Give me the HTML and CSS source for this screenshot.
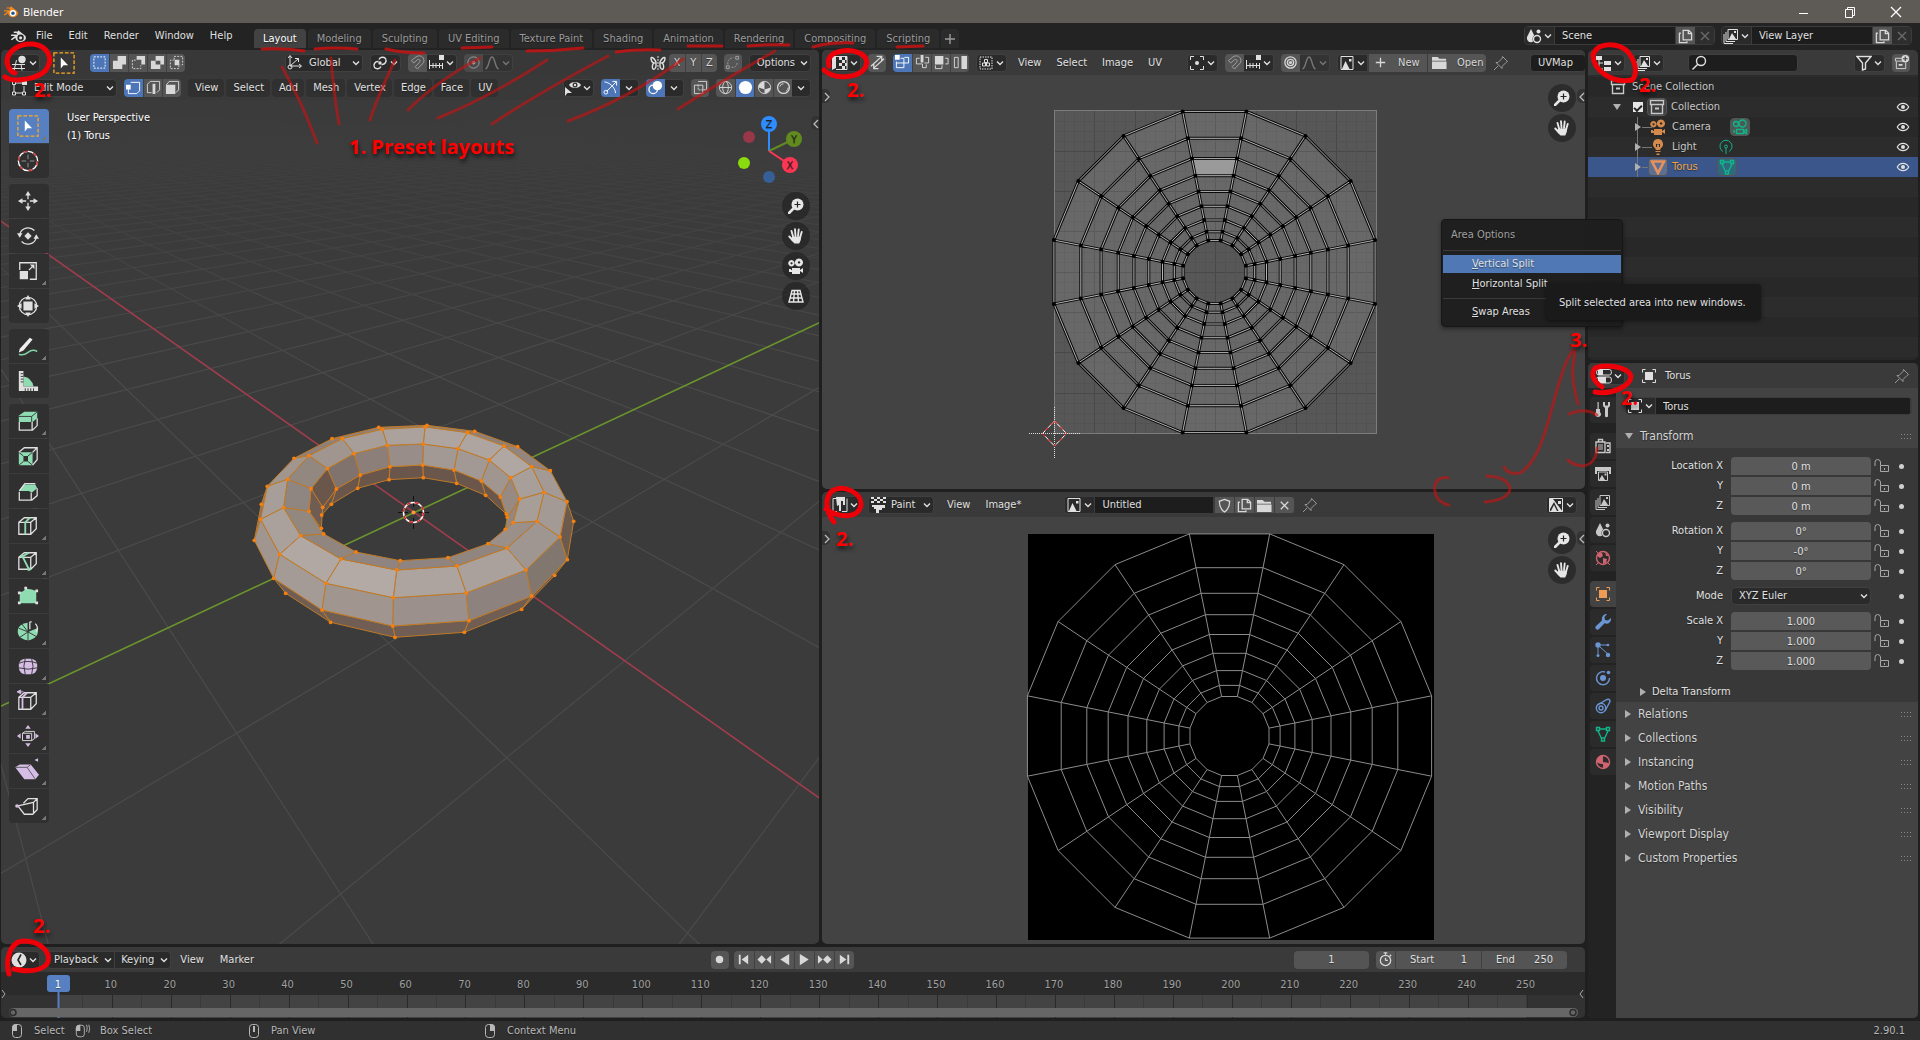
FILE: index.html
```html
<!DOCTYPE html>
<html lang="en">
<head>
<meta charset="utf-8">
<title>Blender</title>
<link rel="stylesheet" href="styles.css">
</head>
<body>
<svg class="defs" aria-hidden="true">
<defs>
<symbol id="chev" viewBox="0 0 10 16"><path class="s2" d="M2 6.500l3 3 3-3"/></symbol>
<symbol id="blender" viewBox="0 0 16 16"><path class="f" d="M8.200 2.200L15 7.600c1.300 1.200 1.200 3.600-.4 5-2 1.800-5.600 1.900-7.700.1-1-.9-1.500-2-1.500-3L2.300 12c-.8.5-1.700-.4-1-1.100L5 8H1.600c-.9 0-1-1.300-.1-1.400h6.200L6.400 4.900H4.200c-.8-.1-.8-1.300 0-1.300h3.700z"/><circle cx="10.600" cy="9.800" r="3.200" fill="#232323"/><circle class="f" cx="10.600" cy="9.800" r="1.600"/></symbol>
<symbol id="blendercol" viewBox="0 0 16 16"><path fill="#f08a1d" d="M8.200 2.200L15 7.600c1.300 1.200 1.200 3.600-.4 5-2 1.800-5.600 1.900-7.700.1-1-.9-1.500-2-1.500-3L2.300 12c-.8.5-1.700-.4-1-1.100L5 8H1.600c-.9 0-1-1.300-.1-1.400h6.200L6.400 4.900H4.200c-.8-.1-.8-1.300 0-1.300h3.700z"/><circle cx="10.600" cy="9.800" r="3.300" fill="#fff"/><circle fill="#265a8f" cx="10.600" cy="9.800" r="1.900"/></symbol>
<symbol id="view3d" viewBox="0 0 16 16"><path class="s" d="M1 9.500h13M0 13.500h14M5.500 5L3 15.500M10 9l1 6.500"/><circle class="f" cx="11" cy="4.500" r="3.700"/></symbol>
<symbol id="selbox" viewBox="0 0 24 24"><rect x="1" y="1" width="22" height="22" fill="none" stroke="#ffa81f" stroke-width="1.400" stroke-dasharray="4 2"/><path d="M8.500 6v12l3-3.500h5z" fill="#fff"/></symbol>
<symbol id="m1" viewBox="0 0 16 16"><rect class="s" x="2" y="2" width="12" height="12" stroke-dasharray="2 1.400"/></symbol>
<symbol id="m2" viewBox="0 0 16 16"><path class="f" d="M6 1h9v9h-4v5H1V6h5z"/></symbol>
<symbol id="m3" viewBox="0 0 16 16"><path class="f" d="M6 1h9v9h-4V5H6z"/><path class="s" d="M5 5.500H1.500v9h9V11" stroke-dasharray="2 1.400"/></symbol>
<symbol id="m4" viewBox="0 0 16 16"><path class="f" fill-rule="evenodd" d="M6 1h9v9h-4v5H1V6h5zM6 6v4h5V6z"/></symbol>
<symbol id="m5" viewBox="0 0 16 16"><path class="f" d="M6 5h5v6H6z"/><path class="s" d="M5.500 5V1.500h9v9H12M10.500 11v3.500h-9v-9H5" stroke-dasharray="2 1.400"/></symbol>
<symbol id="axes" viewBox="0 0 16 16"><path class="s" d="M3 1v10h11M3 11L11 4M1 3l2-2.500L5 3M12 9l2.500 2-2.500 2M8 3.500h3.500V7"/><circle class="s" cx="3" cy="12" r="2"/></symbol>
<symbol id="pivot" viewBox="0 0 16 16"><path class="s2" d="M6.500 6.500a4 4 0 0 0-4 6 4 4 0 0 0 6.500-1M7 4.500a4 4 0 0 1 6.500-1 4 4 0 0 1-4 6"/><circle class="f" cx="8" cy="8" r="1.700"/></symbol>
<symbol id="magnet" viewBox="0 0 16 16"><path class="s" d="M1.500 6l5-4c3-2 7-1 8 2s0 5-2 6l-4.500 5-2.500-2.500 4.500-4.500c2-2 0-4-2-3L4 8.500z"/></symbol>
<symbol id="snapinc" viewBox="0 0 16 16"><path class="s" d="M1.500 5v9M14.500 8v6M1.500 10.500h13M5 8v5M8 8v5M11.500 8v5"/><path class="f" d="M11 0h5v5h-5z"/></symbol>
<symbol id="prop" viewBox="0 0 16 16"><circle class="s2" cx="8" cy="8" r="6"/><circle class="s2" cx="8" cy="8" r="3.300"/><circle class="f" cx="8" cy="8" r="1.700"/></symbol>
<symbol id="prop1" viewBox="0 0 16 16"><circle class="s" cx="8" cy="8" r="6"/><circle class="f" cx="8" cy="8" r="2"/></symbol>
<symbol id="curve" viewBox="0 0 16 16"><path class="s2" d="M1.500 14C5 13 5 2 8 2s3 11 6.500 12"/></symbol>
<symbol id="bfly" viewBox="0 0 16 16"><path class="s2" d="M6 7C4 2 1 2 1 3s0 4 3 5c-2 1-2 5-1 6s3-1 3-3zM10 7c2-5 5-5 5-4s0 4-3 5c2 1 2 5 1 6s-3-1-3-3z"/><path class="s" d="M8 1v14" stroke-dasharray="2 1"/></symbol>
<symbol id="automerge" viewBox="0 0 16 16"><path class="s" d="M3 10L3 7Q5 3 9 3M7 13h3q3-1 3-6" stroke-dasharray="2 1.400"/><path class="s" d="M1.500 11.500h3v3h-3zM11.500 1.500h3v3h-3z"/></symbol>
<symbol id="editm" viewBox="0 0 16 16"><path class="s" d="M4 3h7M3 4v8M13 6v6M4 13h8M1.500 1.500h3v3h-3zM1.500 12h3v3h-3zM11.500 12h3v3h-3z"/><path class="f" d="M11 0h5v5h-5z"/></symbol>
<symbol id="vsel" viewBox="0 0 16 16"><path class="s" d="M5 2.500h9.500v9l-3 3H2.500V8"/><path class="f" d="M0 5h5v5H0z"/></symbol>
<symbol id="esel" viewBox="0 0 16 16"><path class="s" d="M6 13.500H1.500v-9l3-3h10v9l-3 3"/><path class="f" d="M7 4h3v11H7z"/></symbol>
<symbol id="fsel" viewBox="0 0 16 16"><path class="s" d="M1.500 5l3-3.500h10v9l-3 3"/><path class="f" d="M1 5h10v10H1z"/></symbol>
<symbol id="vis" viewBox="0 0 16 16"><path class="f" fill-rule="evenodd" d="M4 5C6 1 14 1 16 5c-2 4-10 4-12 0zM10 2.500a2.500 2.500 0 1 0 .1 0zM0 7v9l2.500-3H7z"/><circle class="f" cx="10" cy="5" r="1.200"/></symbol>
<symbol id="giz" viewBox="0 0 16 16"><path class="s" d="M4 12L14 2M10 1.500h4.500V6M1.500 2c5 .5 11 5 12 12"/><circle class="s" cx="3" cy="13" r="2"/></symbol>
<symbol id="over" viewBox="0 0 16 16"><circle class="f" cx="10" cy="6" r="5"/><circle class="s2" cx="5.500" cy="10" r="4.500"/></symbol>
<symbol id="xray" viewBox="0 0 16 16"><path class="s" d="M5.500 1.500h9v9h-3M1.500 5.500h9v9h-9z"/><path class="s" d="M5.500 5v5.500H11" stroke-dasharray="2 1"/></symbol>
<symbol id="wire" viewBox="0 0 16 16"><circle class="s" cx="8" cy="8" r="6.500"/><ellipse class="s" cx="8" cy="8" rx="3" ry="6.500"/><path class="s" d="M1.500 8h13"/></symbol>
<symbol id="solid" viewBox="0 0 16 16"><circle class="f" cx="8" cy="8" r="7"/></symbol>
<symbol id="matp" viewBox="0 0 16 16"><circle class="s" cx="8" cy="8" r="6.500"/><path class="f" d="M8 1.500A6.500 6.500 0 0 0 1.500 8L8 10zM8 10l6.500-2A6.500 6.500 0 0 1 8 14.500z"/></symbol>
<symbol id="rend" viewBox="0 0 16 16"><circle class="s2" cx="8" cy="8" r="6.300"/><path class="s" d="M4 7q1-3 4-3M11 12q2-2 2-4" /></symbol>
<symbol id="uvicon" viewBox="0 0 16 16"><path class="f" d="M0 1h4v12l-4 2z"/><path class="s" d="M4 1.500h11v13H4"/><path class="f" d="M7 2h3v3H7zM10 5h3v3h-3zM7 8h3v3H7zM10 11h3v3h-3zM13 2h2v3h-2zM13 8h2v3h-2z"/></symbol>
<symbol id="sync" viewBox="0 0 16 16"><path class="s2" d="M1 12L12 2M7 1.500h5.500V6M15 4L4 14M4 9.500V14.500h5"/></symbol>
<symbol id="uv1" viewBox="0 0 16 16"><path class="s" d="M6 3.500h3.500v10h-8V7M6 8.500h8.500v-6H10M1.500 8.500H6"/><path class="f" d="M0 0h5v5H0z"/></symbol>
<symbol id="uv2" viewBox="0 0 16 16"><path class="s" d="M5 3.500H1.500v6H8v4h4V10M11 2.500h3.500v6H10"/><path class="f" d="M6 0h3v8H6z"/></symbol>
<symbol id="uv3" viewBox="0 0 16 16"><path class="s" d="M12 3.500h3v6h-3M1.500 11v3.500h7V11"/><path class="f" d="M1 1h9v9H1z"/></symbol>
<symbol id="uv4" viewBox="0 0 16 16"><path class="s" d="M1.500 2.500h4v11h-4z"/><path class="f" d="M9 1h6v14H9z"/></symbol>
<symbol id="sticky" viewBox="0 0 16 16"><path class="s" d="M2 2h12v12H2z" stroke-dasharray="1.500 1"/><path class="s" d="M6.500 4.500h3v3h-3zM4.500 8h3v3h-3zM8.500 8h3v3h-3z"/></symbol>
<symbol id="bound" viewBox="0 0 16 16"><path class="s" d="M1.500 5V1.500H5M11 1.500h3.500V5M14.500 11v3.500H11M5 14.500H1.500V11"/><circle class="f" cx="8" cy="8" r="2"/></symbol>
<symbol id="image" viewBox="0 0 16 16"><path class="s" d="M2 1.500h12v13H2z"/><path class="f" d="M3 14l3.500-8 4 8zM10 4h2.500v2.500H10z"/></symbol>
<symbol id="imagea" viewBox="0 0 16 16"><path class="s" d="M1.500 1.500h13v13h-13z"/><path class="f" d="M2 2h3l10 13H11L6 5 2 12zM3 14l3-6 3 6zM10 4h3v3h-3z"/></symbol>
<symbol id="plus" viewBox="0 0 16 16"><path class="s2" d="M8 3v10M3 8h10"/></symbol>
<symbol id="folder" viewBox="0 0 16 16"><path class="f" d="M0 2h6l2 2h7v2H0zM0 7h15.500v8H0z"/></symbol>
<symbol id="pin" viewBox="0 0 16 16"><path class="s" d="M9.500 1.500l5 5-1.500 1-4 4 0 2-6-6 2 0 4-4zM5 11l-4 4"/></symbol>
<symbol id="scene" viewBox="0 0 16 16"><path class="f" d="M5 1l4 8a4 4 0 0 1-3 5 4 4 0 0 1-5-5z"/><circle cx="11" cy="11" r="4.500" fill="#2a2a2a"/><circle class="s2" cx="11" cy="11" r="3.500"/><circle class="f" cx="12.500" cy="3.500" r="2"/></symbol>
<symbol id="vlayer" viewBox="0 0 16 16"><path class="s" d="M5 1.500h9.500v10H5zM3 4v9.500h9M1 6v9.500h9"/><path class="f" d="M6 11l3-6 4 6zM11 3h2v2h-2z"/></symbol>
<symbol id="copy" viewBox="0 0 16 16"><path class="s2" d="M5.500 1.500h6l3 3v7h-9zM11 2v3h3M3 4.500H1.500v10h8V13"/></symbol>
<symbol id="x" viewBox="0 0 16 16"><path class="s2" d="M4 4l8 8M12 4l-8 8"/></symbol>
<symbol id="tree" viewBox="0 0 16 16"><path class="f" d="M0 1h6v4H0zM8 6h7v4H8zM8 12h7v4H8z"/><path class="s" d="M3 5v9h4M3 8h4"/></symbol>
<symbol id="search" viewBox="0 0 16 16"><circle class="s2" cx="10" cy="6" r="4.500"/><path class="s2" d="M7 9l-5.500 5.500"/></symbol>
<symbol id="filter" viewBox="0 0 16 16"><path class="s2" d="M1 1.500h14L9.500 8v6l-3 1V8z"/></symbol>
<symbol id="box" viewBox="0 0 16 16"><path class="s2" d="M1.500 1.500h13v4h-13zM2.500 6v8.500h11V6"/><path class="f" d="M6 8.500h4v2H6z"/></symbol>
<symbol id="newcol" viewBox="0 0 16 16"><path class="s" d="M9 3.500H1.500v3h12M2.500 7v7.500h10V8"/><path class="f" d="M5 9.500h4v2H5z"/><circle class="f" cx="12" cy="4" r="4"/><path d="M12 1.500v5M9.500 4h5" stroke="#444" stroke-width="1.300"/></symbol>
<symbol id="cam" viewBox="0 0 16 16"><path class="f" fill-rule="evenodd" d="M3.500 2a3.200 3.200 0 1 1-.1 0zM3.500 4.200a1 1 0 1 0 .1 0zM11 .5a4 4 0 1 1-.1 0zM11 3.200a1.200 1.200 0 1 0 .1 0zM1 11h2v1h1v-2h8v2l3-2v5l-3-2v3H4v-2H1z"/></symbol>
<symbol id="camo" viewBox="0 0 16 16"><circle class="s2" cx="4" cy="5" r="2.500"/><circle class="s2" cx="10.500" cy="4.500" r="3.500"/><path class="s2" d="M4.500 10.500h7v4h-7zM12 12l2.500-1.500v4L12 13zM2 11v3"/></symbol>
<symbol id="bulb" viewBox="0 0 16 16"><path class="f" fill-rule="evenodd" d="M8 0a5 5 0 0 1 3 9l-1 2H6L5 9a5 5 0 0 1 3-9zM6 5v3h1V6h2v2h1V5H9L8 6 7 5zM5.500 12h5v1h-5zM6.500 14.500h3v1.500h-3z"/></symbol>
<symbol id="lightd" viewBox="0 0 16 16"><path class="s" d="M5 12.500A6 6 0 1 1 11 12.500M8 9v6"/><circle class="s" cx="8" cy="7.500" r="1.500"/></symbol>
<symbol id="mesh" viewBox="0 0 16 16"><path d="M2 2.500h12L8 14z" fill="none" stroke="currentColor" stroke-width="2.600"/></symbol>
<symbol id="meshd" viewBox="0 0 16 16"><path class="s2" d="M5 3h6M3 5l3.500 7.500M13 5l-3.500 7.500M1.500 1.500h3v3h-3zM11.500 1.500h3v3h-3zM6.500 12h3v3h-3z"/></symbol>
<symbol id="eye" viewBox="0 0 16 16"><path class="s2" d="M1.500 8C4.500 2.500 11.500 2.500 14.500 8 11.500 13.500 4.500 13.500 1.500 8z"/><circle class="f" cx="8" cy="8" r="2.300"/></symbol>
<symbol id="props" viewBox="0 0 16 16"><rect class="s" x=".7" y="1.500" width="14.600" height="5.500" rx="2"/><rect class="s" x=".7" y="9" width="14.600" height="6" rx="2"/><path class="f" d="M2 2h5v5H2zM2 9h8v6H2z"/></symbol>
<symbol id="object" viewBox="0 0 16 16"><path class="s" d="M1.500 4.500v-3h3M11.500 1.500h3v3M14.500 11.500v3h-3M4.500 14.500h-3v-3"/><path class="f" d="M4 4h8v8H4z"/></symbol>
<symbol id="tool" viewBox="0 0 16 16"><path class="f" d="M2.500 0h1.200v7H5v3c2 2 1 5-2 5s-4-3-2-5V7h1.500zM8 0v4l2 2v8.500q1.500 1.500 3 0V6l2-2V0l-2 0v3.500h-3V0z"/></symbol>
<symbol id="render" viewBox="0 0 16 16"><path class="s2" d="M1 4h9v10.500H1zM3.500 4V1.500h4V4M11 5h4v9.500h-4"/><path class="s" d="M3 7h5M3 9h5M3 11h5"/><path class="f" d="M12 7h2v2h-2zM12 11h2v2h-2z"/></symbol>
<symbol id="output" viewBox="0 0 16 16"><path class="f" d="M0 1h16v7h-2V5H2v3H0z"/><path class="s" d="M3.500 6h9v8.500h-9z"/><path class="f" d="M4 14l3-5 3 5zM9.500 7.500h2v2h-2z"/></symbol>
<symbol id="world" viewBox="0 0 16 16"><circle class="s2" cx="8" cy="8" r="6.500"/><path class="f" d="M3 3l4 0 1 3-3 2-3-2zM8 8l4 1-1 4-3 1zM10 2l4 4-3 0z"/><path class="s" d="M1 1l3 3M15 15l-2-2M1 15l2-2"/></symbol>
<symbol id="wrench" viewBox="0 0 16 16"><path class="f" d="M12 0L9.500 3 10 6l3 .6L15.800 4C17 8 13 11 9.600 9.300L4 15c-2 2-5-1-3-3l6-5.400C6 3 9-.5 12 0z"/></symbol>
<symbol id="part" viewBox="0 0 16 16"><path class="s" d="M5 3h7M3 5v7M5 5l8 7"/><circle class="f" cx="3" cy="3" r="2.700"/><circle class="f" cx="13" cy="3" r="1.300"/><circle class="f" cx="3" cy="13.500" r="1.500"/><circle class="f" cx="13" cy="13" r="2.200"/></symbol>
<symbol id="phys" viewBox="0 0 16 16"><path class="s2" d="M10 2a6.500 6.500 0 1 0 4.500 6"/><circle class="f" cx="8" cy="8" r="3"/><circle class="f" cx="13.500" cy="2.500" r="1.800"/></symbol>
<symbol id="constr" viewBox="0 0 16 16"><circle class="s2" cx="6" cy="10" r="4.700"/><circle class="s2" cx="6" cy="10" r="2"/><path class="s2" d="M2.500 7L12 1.500c3-1 3.500 1.500 2.500 3L10 13"/></symbol>
<symbol id="mat" viewBox="0 0 16 16"><circle class="s2" cx="8" cy="8" r="6.500"/><path class="f" d="M8 1.500A6.500 6.500 0 0 0 1.500 8q3 2.500 6.500 2zM8 8q4 0 6.500 1.500A6.500 6.500 0 0 1 8 14.500z"/></symbol>
<symbol id="lock" viewBox="0 0 16 16"><path class="s" d="M1 8V4.500q0-3 2.500-3T6.500 4v3M6.500 7.500h8v6h-8z"/><path class="f" d="M10 10h1v2h-1z"/></symbol>
<symbol id="paint" viewBox="0 0 16 16"><path class="s" d="M5 1.500H1v13h4M10 14.500h5v-13"/><path class="f" d="M4 0h9v8H11V4H9v10H7V8L5 9z"/></symbol>
<symbol id="brush" viewBox="0 0 16 16"><path class="f" d="M1 0h3v2H1zM7 0h3v2H7zM13 0h3v2h-3zM4 2h3v2H4zM10 2h3v2h-3zM1 4h3v2H1zM7 4h3v2H7zM13 4h3v2h-3zM2 8h13v3h-3v2H9v3H6v-4H4v-2H2z"/></symbol>
<symbol id="shield" viewBox="0 0 16 16"><path class="s2" d="M8 1.500l5.500 2c0 6-2 9-5.500 11.500C4.500 12.500 2.500 9.500 2.500 3.500z"/></symbol>
<symbol id="clock" viewBox="0 0 16 16"><circle class="f" cx="8" cy="8" r="7.500"/><path d="M10 2.500L7 8l3 5" fill="none" stroke="#222" stroke-width="1.600"/></symbol>
<symbol id="stopw" viewBox="0 0 16 16"><circle class="s2" cx="8" cy="9" r="5.500"/><path class="s2" d="M6 1h4M8 1v2M8 9V6M8 9h2.500M12.500 3l1.500 1.500"/></symbol>
<symbol id="dot" viewBox="0 0 16 16"><circle class="f" cx="8" cy="8" r="4"/></symbol>
<symbol id="first" viewBox="0 0 16 16"><path class="f" d="M3 3h2v10H3zM13 3v10L6 8z"/></symbol>
<symbol id="prevk" viewBox="0 0 16 16"><path class="f" d="M5 3.500L9.500 8 5 12.500.5 8zM15 3.500v9L10 8z"/></symbol>
<symbol id="playb" viewBox="0 0 16 16"><path class="f" d="M13 2v12L3.500 8z"/></symbol>
<symbol id="play" viewBox="0 0 16 16"><path class="f" d="M3 2v12l9.500-6z"/></symbol>
<symbol id="nextk" viewBox="0 0 16 16"><path class="f" d="M11 3.500L15.500 8 11 12.500 6.500 8zM1 3.500v9L6 8z"/></symbol>
<symbol id="last" viewBox="0 0 16 16"><path class="f" d="M11 3h2v10h-2zM3 3v10l7-5z"/></symbol>
<symbol id="ml" viewBox="0 0 16 16"><rect class="s" x="3.500" y="1.500" width="9" height="13" rx="3"/><path class="f" d="M3 8V5q0-4 5-4v7z"/></symbol>
<symbol id="mld" viewBox="0 0 18 16"><rect class="s" x="1.500" y="1.500" width="9" height="13" rx="3"/><path class="f" d="M1 8V5q0-4 5-4v7z"/><path class="s" d="M13 1q1.500 3 0 8M15.500 1q2 4 0 9"/></symbol>
<symbol id="mm" viewBox="0 0 16 16"><rect class="s" x="3.500" y="1.500" width="9" height="13" rx="3"/><path class="f" d="M7 3h2v6H7z"/></symbol>
<symbol id="mr" viewBox="0 0 16 16"><rect class="s" x="3.500" y="1.500" width="9" height="13" rx="3"/><path class="f" d="M13 8V5q0-4-5-4v7z"/></symbol>
<symbol id="zoomi" viewBox="0 0 16 16"><circle class="f" cx="9.500" cy="6.500" r="6"/><path d="M1 15l4.500-4.500" stroke="currentColor" stroke-width="2.600" stroke-linecap="round"/><path d="M9.500 3.500v6M6.500 6.500h6" stroke="#222" stroke-width="1.200"/></symbol>
<symbol id="hand" viewBox="0 0 16 16"><path d="M5.200 9L3.500 3M7.500 8L7 1.200M10 8l.7-6.500M12.200 9l1.500-5M4.500 12L1.300 8.500" stroke="currentColor" stroke-width="1.900" stroke-linecap="round"/><path class="f" d="M4.200 8.500h9q0 4-2 7H6.500q-3-2-3.500-4.500z"/></symbol>
<symbol id="persp" viewBox="0 0 16 16"><path class="s2" d="M4 2.500h8l3 11.500H1zM3 6h10M2 10h12M6.500 2.500L5.500 14M9.500 2.500l1 11.500"/></symbol>
<symbol id="cube" viewBox="0 0 24 24"><path class="s2" d="M2 8h13v13H2zM2 8l6-5h13v12l-6 6M15 8l6-5"/></symbol>
</defs>
</svg>

<header class="titlebar">
  <svg class="ic logo"><use href="#blendercol"/></svg><span>Blender</span>
  <div class="winctl">
    <button aria-label="Minimise"><svg class="ic"><path d="M3 9.500h9" stroke="#fff"/></svg></button>
    <button aria-label="Restore"><svg class="ic"><path d="M3.500 5.500h7v8h-7zM5.500 5V3.500h7v8H11" fill="none" stroke="#fff"/></svg></button>
    <button aria-label="Close"><svg class="ic"><path d="M3 3l10 10M13 3L3 13" stroke="#fff" stroke-width="1.300"/></svg></button>
  </div>
</header>

<nav class="topbar">
  <div class="appmenu">
    <button aria-label="Blender"><svg class="ic"><use href="#blender"/></svg></button>
    <button>File</button><button>Edit</button><button>Render</button><button>Window</button><button>Help</button>
  </div>
  <div class="tabs">
    <button class="on">Layout</button><button>Modeling</button><button>Sculpting</button><button>UV Editing</button><button>Texture Paint</button><button>Shading</button><button>Animation</button><button>Rendering</button><button>Compositing</button><button>Scripting</button><button class="add" aria-label="Add workspace"><svg class="ic"><use href="#plus"/></svg></button>
  </div>
  <div class="idrow">
    <div class="idb"><button class="dd" aria-label="Browse scene"><svg class="ic"><use href="#scene"/></svg><svg class="cv"><use href="#chev"/></svg></button><input aria-label="Scene" value="Scene"><button class="tg" aria-label="New scene"><svg class="ic"><use href="#copy"/></svg></button><button class="off" aria-label="Remove scene"><svg class="ic"><use href="#x"/></svg></button></div>
    <div class="idb"><button class="dd" aria-label="Browse view layer"><svg class="ic"><use href="#vlayer"/></svg><svg class="cv"><use href="#chev"/></svg></button><input aria-label="View layer" value="View Layer"><button class="tg" aria-label="New view layer"><svg class="ic"><use href="#copy"/></svg></button><button class="off" aria-label="Remove view layer"><svg class="ic"><use href="#x"/></svg></button></div>
  </div>
</nav>

<main class="screen">
  <div class="work">
    <div class="editors">
      <section class="area view3d">
        <svg id="scene3d" class="under" viewBox="1 50 818 894" preserveAspectRatio="xMidYMid slice"></svg>
        <div class="hd">
          <button class="dd" aria-label="Editor type"><svg class="ic"><use href="#view3d"/></svg><svg class="cv"><use href="#chev"/></svg></button>
          <button class="acttool" aria-label="Select Box"><svg><use href="#selbox"/></svg></button>
          <div class="grp modes"><button class="tg on" aria-label="Set"><svg class="ic"><use href="#m1"/></svg></button><button class="tg" aria-label="Extend"><svg class="ic"><use href="#m2"/></svg></button><button class="tg" aria-label="Subtract"><svg class="ic"><use href="#m3"/></svg></button><button class="tg" aria-label="Difference"><svg class="ic"><use href="#m4"/></svg></button><button class="tg" aria-label="Intersect"><svg class="ic"><use href="#m5"/></svg></button></div>
          <label class="dd orient"><svg class="ic"><use href="#axes"/></svg><select aria-label="Orientation"><option>Global</option></select><svg class="cv"><use href="#chev"/></svg></label>
          <button class="dd" aria-label="Pivot"><svg class="ic"><use href="#pivot"/></svg><svg class="cv"><use href="#chev"/></svg></button>
          <div class="grp"><button class="tg dim" aria-label="Snap"><svg class="ic"><use href="#magnet"/></svg></button><button class="dd" aria-label="Snap to"><svg class="ic"><use href="#snapinc"/></svg><svg class="cv"><use href="#chev"/></svg></button></div>
          <div class="grp faint"><button class="tg dim" aria-label="Proportional"><svg class="ic"><use href="#prop1"/></svg></button><button class="dd" aria-label="Falloff"><svg class="ic"><use href="#curve"/></svg><svg class="cv"><use href="#chev"/></svg></button></div>
          <div class="end mirror">
            <svg class="ic"><use href="#bfly"/></svg>
            <div class="grp letters"><button class="tg">X</button><button class="tg">Y</button><button class="tg">Z</button></div>
            <button class="tg solo dim" aria-label="Auto merge"><svg class="ic"><use href="#automerge"/></svg></button>
            <button class="dd txt">Options<svg class="cv"><use href="#chev"/></svg></button>
          </div>
        </div>
        <div class="hd clear">
          <label class="dd mode"><svg class="ic"><use href="#editm"/></svg><select aria-label="Mode"><option>Edit Mode</option></select><svg class="cv"><use href="#chev"/></svg></label>
          <div class="grp"><button class="tg on" aria-label="Vertex"><svg class="ic"><use href="#vsel"/></svg></button><button class="tg" aria-label="Edge"><svg class="ic"><use href="#esel"/></svg></button><button class="tg" aria-label="Face"><svg class="ic"><use href="#fsel"/></svg></button></div>
          <div class="menus boxed"><button>View</button><button>Select</button><button>Add</button><button>Mesh</button><button>Vertex</button><button>Edge</button><button>Face</button><button>UV</button></div>
          <div class="end">
            <button class="dd" aria-label="Visibility"><svg class="ic"><use href="#vis"/></svg><svg class="cv"><use href="#chev"/></svg></button>
            <div class="grp"><button class="tg on" aria-label="Gizmos"><svg class="ic"><use href="#giz"/></svg></button><button class="dd" aria-label="Gizmo options"><svg class="cv"><use href="#chev"/></svg></button></div>
            <div class="grp"><button class="tg on" aria-label="Overlays"><svg class="ic"><use href="#over"/></svg></button><button class="dd" aria-label="Overlay options"><svg class="cv"><use href="#chev"/></svg></button></div>
            <button class="tg solo" aria-label="X-ray"><svg class="ic"><use href="#xray"/></svg></button>
            <div class="grp"><button class="tg" aria-label="Wireframe"><svg class="ic"><use href="#wire"/></svg></button><button class="tg on" aria-label="Solid"><svg class="ic"><use href="#solid"/></svg></button><button class="tg" aria-label="Material"><svg class="ic"><use href="#matp"/></svg></button><button class="tg" aria-label="Rendered"><svg class="ic"><use href="#rend"/></svg></button><button class="dd" aria-label="Shading options"><svg class="cv"><use href="#chev"/></svg></button></div>
          </div>
        </div>
        <div class="vbody">
          <div class="toolbar">
            <div><button class="on more" aria-label="Select Box"><svg><use href="#selbox"/></svg></button><button aria-label="Cursor"><svg viewBox="0 0 24 24"><circle cx="12" cy="12" r="10.500" fill="none" stroke="#fff" stroke-width="1.500"/><circle cx="12" cy="12" r="10.500" fill="none" stroke="#c33" stroke-width="1.500" stroke-dasharray="5 6"/><path d="M12 5v5M12 14v5M5 12h5M14 12h5" stroke="#999"/></svg></button></div>
            <div>
              <button aria-label="Move"><svg viewBox="0 0 24 24"><path class="f" d="M12 1l3 5H9zM12 23l3-5H9zM1 12l5-3v6zM23 12l-5-3v6z"/><path class="s2" d="M12 5v5M12 14v5M5 12h5M14 12h5"/></svg></button>
              <button aria-label="Rotate"><svg viewBox="0 0 24 24"><path class="s2" d="M3 10a9.500 9.500 0 0 1 16-4M21 14a9.500 9.500 0 0 1-16 4"/><path class="f" d="M0 9h6l-3 5zM24 15h-6l3-5zM12 8l4 4-4 4-4-4z"/></svg></button>
              <button class="more" aria-label="Scale"><svg viewBox="0 0 24 24"><path class="s2" d="M3 11V3h18v18h-7"/><path class="f" d="M3 12h9v9H3zM19 5v5l-5-5z"/><path class="s2" d="M13 11l5-5"/></svg></button>
              <button aria-label="Transform"><svg viewBox="0 0 24 24"><circle class="s2" cx="12" cy="12" r="9.500"/><path class="f" d="M7 7h10v10H7zM12 0l3 5H9zM12 24l3-5H9zM0 12l5-3v6zM24 12l-5-3v6z"/></svg></button>
            </div>
            <div>
              <button class="more" aria-label="Annotate"><svg viewBox="0 0 24 24"><path d="M3 15L14 3l3 2L7 17l-5 2z" fill="#eee"/><path d="M2 21q5 2 10-2t10-1" fill="none" stroke="#7fd3a4" stroke-width="1.600"/></svg></button>
              <button aria-label="Measure"><svg viewBox="0 0 24 24"><path d="M7 18V7q9 1 11 11z" fill="#8fdcb3"/><path class="f" d="M2 1h5v17h16v5H2z"/><path d="M4 4h3M4 7h3M4 10h3M4 13h3M9 20v3M12 20v3M15 20v3M18 20v3" stroke="#333"/></svg></button>
            </div>
            <div>
              <button class="more" aria-label="Extrude"><svg viewBox="0 0 24 24"><path fill="#8fdcb3" d="M2 6l6-4h14v7l-5 4H2z"/><path d="M2 7h14l6-5M16 7v6" fill="none" stroke="#333"/><path class="s2" d="M2.500 13v9h14v-9M17 22l5-5V9"/></svg></button>
              <button aria-label="Inset"><svg viewBox="0 0 24 24"><path fill="#8fdcb3" fill-rule="evenodd" d="M2 8h15v14H2zM7 12v6h5v-6z"/><path d="M2 8l5 4M17 8l-5 4M2 22l5-4M17 22l-5-4" stroke="#333"/><path class="s2" d="M2 8l6-5h14v13l-5 6M17 8l5-5"/></svg></button>
              <button aria-label="Bevel"><svg viewBox="0 0 24 24"><path fill="#8fdcb3" d="M2 12l6-7h12l2 4-6 5-3-2z"/><path class="s2" d="M2.500 13v9h13v-8M16 22l6-5V9M2.500 12l6-8H20"/></svg></button>
              <button class="more" aria-label="Loop Cut"><svg viewBox="0 0 24 24"><use href="#cube"/><path d="M9 21V8l5-5" fill="none" stroke="#8fdcb3" stroke-width="2"/></svg></button>
              <button class="more" aria-label="Knife"><svg viewBox="0 0 24 24"><use href="#cube"/><path d="M13 3L6 7l7 14" fill="none" stroke="#8fdcb3" stroke-width="2"/><circle cx="13" cy="21" r="2" fill="#8fdcb3"/><circle cx="6" cy="7" r="2" fill="#8fdcb3"/></svg></button>
              <button aria-label="Poly Build"><svg viewBox="0 0 24 24"><path fill="#8fdcb3" d="M3 20V8q5-1 6-4 8 0 12 3v13z"/><path class="f" d="M1 7h3v3H1zM1 18h3v3H1zM20 18h3v3h-3zM20 5h3v3h-3zM8 2h3v3H8z"/></svg></button>
              <button class="more" aria-label="Spin"><svg viewBox="0 0 24 24"><path fill="#8fdcb3" d="M12 13V3a11 9.500 0 1 0 10 6z"/><path d="M12 13V3M12 13L2 9M12 13l-9 6M12 13v9M12 13l9 5M12 13L5 4" stroke="#333"/><path class="s2" d="M14 2v8M14 2h2M20 4q4 4 1 9"/></svg></button>
              <button class="more" aria-label="Smooth"><svg viewBox="0 0 24 24"><rect x="2" y="4" width="20" height="17" rx="7" fill="#d6bde6"/><path d="M2 9q10-4 20 0M9 4q-3 8 0 17M16 4q3 8 0 17M2 14q10 3 20 0" stroke="#333" fill="none"/></svg></button>
              <button class="more" aria-label="Edge Slide"><svg viewBox="0 0 24 24"><use href="#cube"/><path d="M6 21V8l5-5" fill="none" stroke="#d6bde6" stroke-width="2"/><path d="M0 2l4-2v4zM4 2h3" stroke="#d6bde6" fill="#d6bde6"/></svg></button>
              <button class="more" aria-label="Shrink/Fatten"><svg viewBox="0 0 24 24"><path class="s" d="M6 9h10v8H6zM6 9l3-2h10v8l-3 2"/><path fill="#d6bde6" d="M12 0l3 4H9zM12 24l3-4H9zM0 12l4-3v6zM24 12l-4-3v6zM10 11h4v4h-4z"/></svg></button>
              <button class="more" aria-label="Shear"><svg viewBox="0 0 24 24"><path fill="#d6bde6" d="M-2 8l5-3h12l9 11-4 5H8zM19 0l4-2v4z"/><path d="M-2 8h13l9 13M11 8l4-3" stroke="#555" fill="none"/></svg></button>
              <button class="more" aria-label="Rip Region"><svg viewBox="0 0 24 24"><path class="s2" d="M7 9l5-5h10v12l-5 5H8l-7-9 17-4v13M18 8l4-4"/><circle cx="0" cy="12" r="2" fill="#d6bde6"/></svg></button>
            </div>
          </div>
          <p class="info">User Perspective<br>(1) Torus</p>
        </div>
        <div class="nav n3d"><button aria-label="Zoom"><svg class="ic"><use href="#zoomi"/></svg></button><button aria-label="Pan"><svg class="ic"><use href="#hand"/></svg></button><button aria-label="Camera"><svg class="ic"><use href="#cam"/></svg></button><button aria-label="Perspective"><svg class="ic"><use href="#persp"/></svg></button></div>
        <button class="pull r low" aria-label="Sidebar"><svg class="ic"><path d="M10 4L6 8l4 4"/></svg></button>
      </section>

      <div class="images">
        <section class="area">
          <div class="hd">
            <button class="dd" aria-label="Editor type"><svg class="ic"><use href="#uvicon"/></svg><svg class="cv"><use href="#chev"/></svg></button>
            <button class="tg solo" aria-label="Sync selection"><svg class="ic"><use href="#sync"/></svg></button>
            <div class="grp"><button class="tg on" aria-label="UV vertex"><svg class="ic"><use href="#uv1"/></svg></button><button class="tg" aria-label="UV edge"><svg class="ic"><use href="#uv2"/></svg></button><button class="tg" aria-label="UV face"><svg class="ic"><use href="#uv3"/></svg></button><button class="tg" aria-label="UV island"><svg class="ic"><use href="#uv4"/></svg></button></div>
            <button class="dd" aria-label="Sticky selection"><svg class="ic"><use href="#sticky"/></svg><svg class="cv"><use href="#chev"/></svg></button>
            <div class="menus uvm"><button>View</button><button>Select</button><button>Image</button><button>UV</button></div>
            <button class="dd piv" aria-label="Pivot"><svg class="ic"><use href="#bound"/></svg><svg class="cv"><use href="#chev"/></svg></button>
            <div class="grp"><button class="tg dim" aria-label="Snap"><svg class="ic"><use href="#magnet"/></svg></button><button class="dd" aria-label="Snap to"><svg class="ic"><use href="#snapinc"/></svg><svg class="cv"><use href="#chev"/></svg></button></div>
            <div class="grp"><button class="tg" aria-label="Proportional"><svg class="ic"><use href="#prop"/></svg></button><button class="dd faint" aria-label="Falloff"><svg class="ic"><use href="#curve"/></svg><svg class="cv"><use href="#chev"/></svg></button></div>
            <div class="grp"><button class="dd" aria-label="Browse image"><svg class="ic"><use href="#image"/></svg><svg class="cv"><use href="#chev"/></svg></button><button class="tg wide"><svg class="ic"><use href="#plus"/></svg><span>New</span></button><button class="tg wide"><svg class="ic"><use href="#folder"/></svg><span>Open</span></button></div>
            <button class="bare" aria-label="Pin"><svg class="ic"><use href="#pin"/></svg></button>
            <button class="dd uvmap">UVMap</button>
          </div>
          <div class="canvas">
            <svg id="uv" class="under" viewBox="822 75 763 414" preserveAspectRatio="xMidYMid slice"></svg>
            <div class="nav"><button aria-label="Zoom"><svg class="ic"><use href="#zoomi"/></svg></button><button aria-label="Pan"><svg class="ic"><use href="#hand"/></svg></button></div>
            <button class="pull l" aria-label="Toolbar"><svg class="ic"><path d="M6 4l4 4-4 4"/></svg></button>
            <button class="pull r" aria-label="Sidebar"><svg class="ic"><path d="M10 4L6 8l4 4"/></svg></button>
          </div>
        </section>
        <section class="area">
          <div class="hd">
            <button class="dd" aria-label="Editor type"><svg class="ic"><use href="#paint"/></svg><svg class="cv"><use href="#chev"/></svg></button>
            <label class="dd pmode"><svg class="ic"><use href="#brush"/></svg><select aria-label="Mode"><option>Paint</option></select><svg class="cv"><use href="#chev"/></svg></label>
            <div class="menus"><button>View</button><button>Image*</button></div>
            <div class="idb img"><button class="dd" aria-label="Browse image"><svg class="ic"><use href="#image"/></svg><svg class="cv"><use href="#chev"/></svg></button><input aria-label="Image name" value="Untitled"><button class="tg" aria-label="Fake user"><svg class="ic"><use href="#shield"/></svg></button><button class="tg" aria-label="New image"><svg class="ic"><use href="#copy"/></svg></button><button class="tg" aria-label="Open image"><svg class="ic"><use href="#folder"/></svg></button><button class="tg" aria-label="Unlink"><svg class="ic"><use href="#x"/></svg></button></div>
            <button class="bare" aria-label="Pin"><svg class="ic"><use href="#pin"/></svg></button>
            <div class="end"><button class="dd" aria-label="Display channels"><svg class="ic"><use href="#imagea"/></svg><svg class="cv"><use href="#chev"/></svg></button></div>
          </div>
          <div class="canvas">
            <svg id="painted" class="under" viewBox="822 517 763 427" preserveAspectRatio="xMidYMid slice"></svg>
            <div class="nav"><button aria-label="Zoom"><svg class="ic"><use href="#zoomi"/></svg></button><button aria-label="Pan"><svg class="ic"><use href="#hand"/></svg></button></div>
            <button class="pull l" aria-label="Toolbar"><svg class="ic"><path d="M6 4l4 4-4 4"/></svg></button>
            <button class="pull r" aria-label="Sidebar"><svg class="ic"><path d="M10 4L6 8l4 4"/></svg></button>
          </div>
        </section>
      </div>
    </div>

    <section class="area timeline">
      <div class="hd">
        <button class="dd" aria-label="Editor type"><svg class="ic"><use href="#clock"/></svg><svg class="cv"><use href="#chev"/></svg></button>
        <div class="grp pk"><button class="dd txt">Playback<svg class="cv"><use href="#chev"/></svg></button><button class="dd txt">Keying<svg class="cv"><use href="#chev"/></svg></button></div>
        <div class="menus"><button>View</button><button>Marker</button></div>
        <div class="transport"><button class="tg solo" aria-label="Auto keying"><svg class="ic"><use href="#dot"/></svg></button>
        <div class="grp"><button class="tg" aria-label="First frame"><svg class="ic"><use href="#first"/></svg></button><button class="tg" aria-label="Previous keyframe"><svg class="ic"><use href="#prevk"/></svg></button><button class="tg" aria-label="Play backwards"><svg class="ic"><use href="#playb"/></svg></button><button class="tg" aria-label="Play"><svg class="ic"><use href="#play"/></svg></button><button class="tg" aria-label="Next keyframe"><svg class="ic"><use href="#nextk"/></svg></button><button class="tg" aria-label="Last frame"><svg class="ic"><use href="#last"/></svg></button></div></div>
        <div class="end frames"><input class="cur" aria-label="Current frame" value="1"><div class="grp"><button class="tg" aria-label="Use preview range"><svg class="ic"><use href="#stopw"/></svg></button><label class="fr"><span>Start</span><input value="1"></label><label class="fr"><span>End</span><input value="250"></label></div></div>
      </div>
      <svg id="ruler" viewBox="1 972 1584 46" preserveAspectRatio="xMidYMid slice"></svg>
    </section>
  </div>

  <div class="side">
    <section class="area outliner">
      <div class="hd">
        <button class="dd" aria-label="Editor type"><svg class="ic"><use href="#tree"/></svg><svg class="cv"><use href="#chev"/></svg></button>
        <button class="dd" aria-label="Display mode"><svg class="ic"><use href="#vlayer"/></svg><svg class="cv"><use href="#chev"/></svg></button>
        <label class="search"><svg class="ic"><use href="#search"/></svg><input aria-label="Search"></label>
        <div class="end"><button class="dd" aria-label="Filter"><svg class="ic"><use href="#filter"/></svg><svg class="cv"><use href="#chev"/></svg></button><button class="tg solo" aria-label="New collection"><svg class="ic"><use href="#newcol"/></svg></button></div>
      </div>
      <ul class="tree">
        <li class="root"><svg class="ic"><use href="#box"/></svg><span>Scene Collection</span></li>
        <li class="coll"><i class="tri down"></i><input type="checkbox" checked aria-label="Enable collection"><b class="chip"><svg class="ic"><use href="#box"/></svg></b><span>Collection</span><svg class="ic eye"><use href="#eye"/></svg></li>
        <li class="obj"><i class="tri"></i><b class="or"><svg class="ic"><use href="#cam"/></svg></b><span>Camera</span><b class="chip data lit"><svg class="ic"><use href="#camo"/></svg></b><svg class="ic eye"><use href="#eye"/></svg></li>
        <li class="obj"><i class="tri"></i><b class="or"><svg class="ic"><use href="#bulb"/></svg></b><span>Light</span><b class="data"><svg class="ic"><use href="#lightd"/></svg></b><svg class="ic eye"><use href="#eye"/></svg></li>
        <li class="obj sel"><i class="tri"></i><b class="or chip"><svg class="ic"><use href="#mesh"/></svg></b><span>Torus</span><b class="chip data"><svg class="ic"><use href="#meshd"/></svg></b><svg class="ic eye"><use href="#eye"/></svg></li>
      </ul>
    </section>

    <section class="area props">
      <div class="hd">
        <button class="dd" aria-label="Editor type"><svg class="ic"><use href="#props"/></svg><svg class="cv"><use href="#chev"/></svg></button>
        <div class="crumb"><svg class="ic"><use href="#object"/></svg><span>Torus</span></div>
        <div class="end"><button class="bare" aria-label="Pin"><svg class="ic"><use href="#pin"/></svg></button></div>
      </div>
      <div class="pbody">
        <div class="ptabs">
          <button aria-label="Tool"><svg class="ic"><use href="#tool"/></svg></button>
          <button class="sp" aria-label="Render"><svg class="ic"><use href="#render"/></svg></button>
          <button aria-label="Output"><svg class="ic"><use href="#output"/></svg></button>
          <button aria-label="View layer"><svg class="ic"><use href="#vlayer"/></svg></button>
          <button aria-label="Scene"><svg class="ic"><use href="#scene"/></svg></button>
          <button class="red" aria-label="World"><svg class="ic"><use href="#world"/></svg></button>
          <button class="sp on" aria-label="Object"><svg class="ic"><use href="#object"/></svg></button>
          <button class="blue" aria-label="Modifiers"><svg class="ic"><use href="#wrench"/></svg></button>
          <button class="blue" aria-label="Particles"><svg class="ic"><use href="#part"/></svg></button>
          <button class="blue" aria-label="Physics"><svg class="ic"><use href="#phys"/></svg></button>
          <button class="blue" aria-label="Constraints"><svg class="ic"><use href="#constr"/></svg></button>
          <button class="green" aria-label="Object data"><svg class="ic"><use href="#meshd"/></svg></button>
          <button class="red" aria-label="Material"><svg class="ic"><use href="#mat"/></svg></button>
        </div>
        <div class="pmain">
          <div class="idb name"><button class="dd" aria-label="Browse object"><svg class="ic"><use href="#object"/></svg><svg class="cv"><use href="#chev"/></svg></button><input aria-label="Object name" value="Torus"></div>
          <h2><i class="tri down"></i>Transform<i class="grip"></i></h2>
          <div class="xform">
            <div class="set">
              <div class="row"><label for="lx">Location X</label><input id="lx" value="0 m"><svg class="ic"><use href="#lock"/></svg><u></u></div>
              <div class="row"><label for="ly">Y</label><input id="ly" value="0 m"><svg class="ic"><use href="#lock"/></svg><u></u></div>
              <div class="row"><label for="lz">Z</label><input id="lz" value="0 m"><svg class="ic"><use href="#lock"/></svg><u></u></div>
            </div>
            <div class="set">
              <div class="row"><label for="rx">Rotation X</label><input id="rx" value="0°"><svg class="ic"><use href="#lock"/></svg><u></u></div>
              <div class="row"><label for="ry">Y</label><input id="ry" value="-0°"><svg class="ic"><use href="#lock"/></svg><u></u></div>
              <div class="row"><label for="rz">Z</label><input id="rz" value="0°"><svg class="ic"><use href="#lock"/></svg><u></u></div>
            </div>
            <div class="row"><label for="rm">Mode</label><div class="dd euler"><select id="rm"><option>XYZ Euler</option></select><svg class="cv"><use href="#chev"/></svg></div><svg class="ic"></svg><u></u></div>
            <div class="set">
              <div class="row"><label for="sx">Scale X</label><input id="sx" value="1.000"><svg class="ic"><use href="#lock"/></svg><u></u></div>
              <div class="row"><label for="sy">Y</label><input id="sy" value="1.000"><svg class="ic"><use href="#lock"/></svg><u></u></div>
              <div class="row"><label for="sz">Z</label><input id="sz" value="1.000"><svg class="ic"><use href="#lock"/></svg><u></u></div>
            </div>
            <h3><i class="tri"></i>Delta Transform</h3>
          </div>
          <h2><i class="tri"></i>Relations<i class="grip"></i></h2>
          <h2><i class="tri"></i>Collections<i class="grip"></i></h2>
          <h2><i class="tri"></i>Instancing<i class="grip"></i></h2>
          <h2><i class="tri"></i>Motion Paths<i class="grip"></i></h2>
          <h2><i class="tri"></i>Visibility<i class="grip"></i></h2>
          <h2><i class="tri"></i>Viewport Display<i class="grip"></i></h2>
          <h2><i class="tri"></i>Custom Properties<i class="grip"></i></h2>
        </div>
      </div>
    </section>
  </div>
</main>

<footer class="status">
  <span class="k1"><svg class="ic"><use href="#ml"/></svg>Select</span>
  <span class="k2"><svg class="ic"><use href="#mld"/></svg>Box Select</span>
  <span class="k3"><svg class="ic"><use href="#mm"/></svg>Pan View</span>
  <span class="k4"><svg class="ic"><use href="#mr"/></svg>Context Menu</span>
  <span class="ver">2.90.1</span>
</footer>

<div class="popup" role="menu">
  <p>Area Options</p>
  <button class="on"><u>V</u>ertical Split</button>
  <button><u>H</u>orizontal Split</button>
  <hr>
  <button><u>S</u>wap Areas</button>
</div>
<div class="tip" role="tooltip">Split selected area into new windows.</div>

<svg class="notes" viewBox="0 0 1920 1040" preserveAspectRatio="none">
  <g class="rings">
    <path d="M5 77C14 83 38 79 46 70C54 58 48 46 33 44C18 43 7 52 7 62C8 68 11 72 15 73"/>
    <path d="M824 70C834 80 860 79 866 66C870 54 854 49 842 51C830 53 827 59 829 66"/>
    <path d="M834 522C826 512 824 498 832 491C844 484 862 493 861 505C859 517 842 520 826 509"/>
    <path d="M1632 80C1612 84 1593 70 1593 55C1597 42 1618 42 1628 52C1636 62 1638 74 1632 80"/>
    <path d="M1595 392C1612 395 1631 386 1631 376C1628 366 1604 364 1595 368C1590 374 1594 382 1602 387"/>
    <path d="M9 974C5 960 10 941 24 941C40 941 51 952 48 962C43 972 26 972 14 969"/>
  </g>
  <g class="under-marks">
    <path d="M262 49Q285 48 304 51"/><path d="M315 49Q335 47 357 49"/><path d="M386 49Q402 53 424 53"/><path d="M462 48L492 47"/><path d="M527 51Q555 51 583 48"/><path d="M616 52Q636 49 660 50"/><path d="M688 46H722"/><path d="M748 46Q770 44 789 45"/><path d="M813 47Q832 42 853 43"/><path d="M897 47L923 46"/>
  </g>
  <g class="fans">
    <path d="M282 67Q302 102 317 143"/><path d="M331 58Q334 96 339 124"/><path d="M395 60Q377 98 370 120"/><path d="M480 58Q438 80 408 110"/><path d="M547 60Q490 97 438 118"/><path d="M608 56Q540 92 492 124"/><path d="M683 59Q630 98 568 121"/><path d="M775 51Q720 82 678 109"/>
    <path d="M1573 350C1552 380 1550 455 1520 473Q1508 475 1504 467"/><path d="M1575 352C1570 375 1574 388 1578 404"/><path d="M1569 414Q1585 407 1597 415"/><path d="M1597 448Q1596 464 1583 466Q1572 465 1568 460"/>
    <path d="M1448 478C1430 474 1430 502 1449 505"/><path d="M1487 476Q1508 477 1510 489Q1508 500 1485 502"/>
  </g>
  <g class="words"><text x="349" y="154">1. Preset layouts</text><text x="34" y="97">2.</text><text x="847" y="97">2.</text><text x="836" y="546">2.</text><text x="1639" y="92">2.</text><text x="1621" y="405">2.</text><text x="33" y="933">2.</text><text x="1570" y="347">3.</text></g>
</svg>
<script src="script.js"></script>
</body>
</html>
```

FILE: styles.css
```css
* { box-sizing: border-box; }
body {
  margin: 0; height: 100vh; display: flex; flex-direction: column; position: relative; overflow: hidden;
  background: #1f1f1f; color: #e0e0e0;
  font: 11px/14px "DejaVu Sans Condensed", "DejaVu Sans", sans-serif;
  text-shadow: 0 1px 1px rgba(0,0,0,.4);
}
button, input, select { font: inherit; color: inherit; text-shadow: inherit; border: 0; margin: 0; padding: 0; background: none; min-width: 0; border-radius: 0; }
select { appearance: none; flex: 1; outline: 0; }
p, h2, h3, ul { margin: 0; padding: 0; font-weight: normal; }
.defs { position: absolute; width: 0; height: 0; }
.ic { width: 16px; height: 16px; flex: none; display: block; }
.cv { width: 10px; height: 16px; flex: none; display: block; }
.s { fill: none; stroke: currentColor; stroke-width: 1; }
.s2 { fill: none; stroke: currentColor; stroke-width: 1.4; }
.f { fill: currentColor; }

.titlebar { height: 23px; flex: none; display: flex; align-items: center; padding: 0 0 0 3px; gap: 5px; background: #5e5a56; color: #fff; font: 11px/23px "Noto Sans", sans-serif; text-shadow: none; }
.titlebar .logo { width: 15px; height: 15px; }
.winctl { margin-left: auto; display: flex; padding-right: 1px; }
.winctl button { width: 46px; height: 21px; display: grid; place-items: center; }

.topbar { height: 27px; flex: none; display: flex; background: #232323; }
.appmenu { display: flex; gap: 16px; padding: 5px 0 0 10px; width: 254px; align-items: flex-start; }
.appmenu button { height: 16px; line-height: 16px; }
.appmenu button:first-child { margin-right: -6px; }
.tabs { display: flex; gap: 2px; align-items: flex-end; padding-bottom: 2px; }
.tabs button { height: 19px; padding: 0 9px; background: #2b2b2b; color: #9b9b9b; border-radius: 4px 4px 0 0; }
.tabs .on { background: #424242; color: #fff; }
.tabs .add { padding: 0 1px; }
.idrow { margin-left: auto; display: flex; gap: 6px; padding: 3px 8px 0 0; }
.idb { display: flex; height: 19px; border-radius: 4px; overflow: hidden; border: 1px solid #3c3c3c; }
.idrow .idb { width: 191px; }
.idb > * { height: 100%; border: 0; border-radius: 0; }
.idb input { flex: 1; background: #1d1d1d; padding: 0 7px; border-left: 1px solid #3c3c3c; border-right: 1px solid #3c3c3c; }
.idb .dd { border: 0; border-radius: 0; height: 100%; }
.off { width: 19px; display: grid; place-items: center; background: #2e2e2e; color: #6a6a6a; }

.screen { flex: 1; min-height: 0; display: grid; grid-template-columns: 1584fr 330fr; gap: 3px; padding: 0 2px 0 1px; }
.work, .side, .images { min-height: 0; min-width: 0; display: grid; gap: 3px; }
.work { grid-template-rows: 1fr auto; }
.editors { min-height: 0; display: grid; grid-template-columns: 818fr 763fr; gap: 3px; }
.images { grid-template-rows: 439fr 452fr; }
.side { grid-template-rows: 310fr 655fr; }
.area { position: relative; overflow: hidden; border-radius: 5px; background: #434343; display: flex; flex-direction: column; min-width: 0; min-height: 0; }
.under { position: absolute; inset: 0; width: 100%; height: 100%; }

.hd { position: relative; height: 25px; flex: none; display: flex; align-items: center; gap: 7px; padding: 0 8px; background: #3a3a3a; white-space: nowrap; }
.hd.clear { background: none; }
.hd > * { flex: none; }
.end { margin-left: auto; display: flex; gap: 7px; align-items: center; }
.dd { display: flex; align-items: center; height: 18px; padding: 0 1px; gap: 1px; background: #2a2a2a; border: 1px solid #404040; border-radius: 4px; }
.dd.txt { padding: 0 1px 0 7px; gap: 4px; }
.tg { height: 18px; width: 19px; display: flex; align-items: center; justify-content: center; background: #555; color: #d8d8d8; }
.tg.on { background: #4d76b8; color: #fff; }
.tg.solo { border-radius: 4px; width: 18px; }
.tg.dim .ic { opacity: .6; }
.tg.wide { width: 59px; gap: 10px; justify-content: flex-start; padding: 0 4px; border-left: 1px solid #3d3d3d; }
.tg .ic { width: 15px; height: 15px; }
.grp { display: flex; }
.grp > * + * { border-left: 1px solid #404040; }
.grp > :first-child { border-radius: 4px 0 0 4px; }
.grp > :last-child { border-radius: 0 4px 4px 0; }
.grp > .dd:not(:first-child) { border-left: 0; }
.faint .dd, .dd.faint { color: #777; background: #333; }
.faint .tg { background: #4a4a4a; }
.letters .tg { width: 16px; }
.mirror .letters { margin-left: -4px; }
.acttool { width: 22px; height: 22px; margin: 0 8px 0 6px; }
.acttool svg, .toolbar svg { display: block; width: 22px; height: 22px; overflow: visible; }
.orient { width: 78px; margin-left: 93px; }
.orient select { padding-left: 5px; }
.mode { width: 108px; }
.mode select { padding-left: 6px; }
.menus { display: flex; gap: 3px; }
.menus button { height: 18px; padding: 0 6px; }
.boxed { gap: 2px; }
.boxed button { background: #303030; border-radius: 4px; padding: 0 6px 0 7px; }
.uvm { margin-left: -2px; }
.view3d .grp .dd:has(.cv:first-child) { width: 19px; justify-content: center; }
.view3d { background: #3b3b3b; }
.view3d .hd { background: #383838; }
.view3d .hd.clear { background: rgba(56,56,56,.6); }

.vbody { position: relative; display: flex; padding: 9px 0 0 8px; gap: 18px; }
.toolbar { display: flex; flex-direction: column; gap: 6px; }
.toolbar div { display: flex; flex-direction: column; gap: 1px; border-radius: 4px; overflow: hidden; }
.toolbar button { width: 40px; height: 34px; background: #303030; display: grid; place-items: center; padding-right: 2px; }
.toolbar .more { background: linear-gradient(135deg, transparent 50%, #777 50%) right 3px bottom 3px / 4px 4px no-repeat #303030; }
.toolbar .on { background-color: #5680c2; }
.info { color: #fff; line-height: 18px; }
.nav { position: absolute; right: 9px; top: 9px; display: flex; flex-direction: column; gap: 2px; }
.n3d { top: 142px; }
.nav button { width: 28px; height: 28px; border-radius: 50%; background: rgba(30,30,30,.6); display: grid; place-items: center; color: #e6e6e6; }
.pull { position: absolute; top: 14px; width: 8px; height: 14px; background: #333; overflow: hidden; display: flex; align-items: center; justify-content: center; }
.pull .ic { width: 14px; height: 14px; fill: none; stroke: #bbb; stroke-width: 1.3; }
.pull.l { left: 0; border-radius: 0 5px 5px 0; }
.pull.r { right: 0; border-radius: 5px 0 0 5px; }
.pull.low { top: 66px; }
.canvas { position: relative; flex: 1; }
.piv { margin-left: 12px; }
.bare { color: #9a9a9a; }
.uvmap { padding: 0 12px 0 7px; margin: 0 -30px 0 14px; background: #1d1d1d; }
.img { width: 231px; height: 18px; margin-left: 30px; }
.img .tg { width: 20px; border-left: 1px solid #3c3c3c; }
.pmode { width: 66px; }
.pmode select { padding-left: 4px; }

.timeline { background: #2b2b2b; }
.pk .txt { padding-left: 6px; gap: 5px; }
.timeline .menus { margin-left: -4px; gap: 4px; }
.transport { position: absolute; left: 44.8%; display: flex; gap: 5px; }
.transport .grp .tg { width: 20px; }
.frames { margin-right: 10px; }
.frames input { text-align: center; }
.cur { width: 75px; height: 18px; background: #545454; border-radius: 4px; }
.fr { display: flex; align-items: center; width: 86px; height: 18px; padding: 0 14px; background: #545454; }
.fr input { width: 100%; flex: 1; text-align: right; }
#ruler { display: block; width: 100%; height: 46px; flex: none; }

.outliner { background: repeating-linear-gradient(#282828 0 20px, #2c2c2c 20px 40px) 0 27px; }
.outliner .hd { padding-left: 6px; gap: 8px; }
.search { width: 110px; height: 18px; margin-left: 16px; background: #1d1d1d; border: 1px solid #404040; border-radius: 4px; display: flex; padding-left: 2px; }
.search input { width: 80px; }
.tree { list-style: none; padding-top: 2px; }
.tree li { height: 20px; display: flex; align-items: center; padding-right: 8px; color: #c8c8c8; }
.tree .root { padding-left: 22px; gap: 6px; }
.coll { padding-left: 25px; }
.coll input { appearance: none; width: 10px; height: 10px; margin: 0 4px 0 12px; background: #e6e6e6; display: grid; place-items: center; }
.coll input::after { content: ""; width: 6px; height: 3px; border: solid #222; border-width: 0 0 2px 2px; transform: rotate(-45deg); }
.tree .obj { padding-left: 47px; background: linear-gradient(#777, #777) 49px 0 / 1px 100% no-repeat, linear-gradient(#777, #777) 54px 50% / 10px 1px no-repeat; }
.tri { width: 0; height: 0; border: solid transparent; border-width: 4px 0 4px 6px; border-left-color: #b0b0b0; flex: none; }
.tri.down { border-width: 6px 4px 0; border-color: #b0b0b0 transparent transparent; }
.tree b { width: 20px; height: 18px; display: grid; place-items: center; margin-right: 4px; font-weight: normal; }
.obj .or { margin-left: 7px; color: #d58a4d; }
.tree .chip { background: #3f3f3f; border: 1px solid #555; border-radius: 4px; }
.obj .data { margin-left: 19px; color: #10b58a; }
.tree .lit { background: #4a5a55; }
.tree .sel { background-color: #3a568a; color: #f5a33c; }
.sel .chip { background: #5c6f95; }
.sel .chip.data { background: #2f6a7c; }
.tree .sel .or { color: #e8925a; }
.tree .eye { width: 14px; height: 14px; margin-left: auto; color: #e0e0e0; }

.props .hd { padding-left: 6px; }
.crumb { display: flex; gap: 8px; align-items: center; margin-left: 9px; }
.pbody { flex: 1; display: flex; background: #232323; min-height: 0; }
.ptabs { width: 28px; padding: 9px 0 0 2px; display: flex; flex-direction: column; gap: 2px; }
.ptabs button { height: 26px; background: #2b2b2b; border-radius: 4px 0 0 4px; display: grid; place-items: center; color: #c8c8c8; }
.ptabs .sp { margin-top: 8px; }
.ptabs .on { background: #434343; color: #ef9b55; }
.ptabs .red { color: #cf6470; }
.ptabs .blue { color: #6b95d2; }
.ptabs .green { color: #12b68a; }
.pmain { flex: 1; background: #434343; padding-top: 9px; }
.name { height: 18px; margin: 0 6px 9px 9px; }
.pmain h2 { height: 24px; padding: 0 6px 0 9px; display: flex; align-items: center; gap: 7px; font-size: 12px; color: #d4d4d4; }
.grip { margin-left: auto; width: 11px; height: 5px; background: repeating-linear-gradient(90deg, #888 0 1px, transparent 1px 3px); mask: repeating-linear-gradient(#000 0 1px, transparent 1px 4px); }
.pmain h3 { display: flex; align-items: center; gap: 6px; padding-left: 24px; height: 20px; margin-top: 5px; font-size: 11px; }
.xform { background: #383838; padding: 9px 0 0; display: flex; flex-direction: column; gap: 7px; }
.set { display: flex; flex-direction: column; gap: 2px; }
.row { display: grid; grid-template-columns: 107px 149px 22px 1fr; height: 18px; align-items: center; }
.row label { text-align: right; }
.row input { height: 18px; width: 140px; background: #595959; text-align: center; margin-left: 8px; }
.row .ic { margin-left: 2px; color: #a8a8a8; }
.row u { justify-self: start; width: 5px; height: 5px; border-radius: 50%; background: #d0d0d0; margin-left: 5px; }
.set .row:first-child input { border-radius: 4px 4px 0 0; }
.set .row:last-child input { border-radius: 0 0 4px 4px; }
.euler { margin-left: 8px; padding: 0 1px 0 7px; width: 140px; }

.status { height: 19px; flex: none; margin-top: 3px; display: flex; align-items: center; background: #303030; color: #b8b8b8; padding: 0 15px 0 9px; }
.status span { display: flex; gap: 9px; align-items: center; }
.k1 { width: 66px; }
.k2 { width: 171px; }
.k3 { width: 236px; }
.ver { margin-left: auto; }

.popup { position: absolute; left: 1441px; top: 219px; width: 182px; background: rgba(30,30,30,.96); border: 1px solid #161616; border-radius: 4px; padding: 0 1px 4px; box-shadow: 0 2px 4px rgba(0,0,0,.4); }
.popup p { height: 31px; padding: 8px 8px 0; color: #a0a0a0; border-bottom: 1px solid #3a3a3a; margin-bottom: 4px; }
.popup button { display: block; width: 100%; height: 20px; text-align: left; padding-left: 29px; }
.popup .on { background: #5078b4; height: 18px; margin-bottom: 1px; }
.popup hr { border: 0; border-top: 1px solid #3a3a3a; margin: 4px 0 3px; }
.tip { position: absolute; left: 1546px; top: 284px; background: #1a1a1a; border-radius: 4px; padding: 12px 15px 10px 13px; box-shadow: 0 1px 4px rgba(0,0,0,.5); }

.notes { position: absolute; inset: 0; width: 100%; height: 100%; pointer-events: none; }
.notes path { fill: none; stroke-linecap: round; }
.rings path { stroke: #ee0008; stroke-width: 5; }
.under-marks path { stroke: #d21010; stroke-width: 3; opacity: .8; }
.fans path { stroke: #c81212; stroke-width: 3; opacity: .62; }
.words text { fill: #f00; font: bold 20px "Open Sans", sans-serif; text-shadow: 1px 3px 4px rgba(0,0,0,.7); }
```

FILE: script.js
```js
const NS = 'http://www.w3.org/2000/svg';
function add(parent, tag, attrs, text) {
  const el = document.createElementNS(NS, tag);
  for (const k in attrs) el.setAttribute(k, attrs[k]);
  if (text !== undefined) el.textContent = text;
  parent.appendChild(el);
  return el;
}

// ---- UV layout of a 16 x 8 torus: nine rings, sixteen spokes
const radii = [163.7, 136.3, 115.6, 98.2, 82.2, 67, 53, 41, 32];
function net(cx, cy, k) {
  return radii.map(r => Array.from({ length: 16 }, (_, i) => {
    const a = (11.25 + 22.5 * i) * Math.PI / 180;
    return [cx + r * k * Math.sin(a), cy - r * k * Math.cos(a)];
  }));
}
const pts = list => list.map(p => p[0].toFixed(1) + ' ' + p[1].toFixed(1)).join('L');
function netPath(rings) {
  let d = rings.map(r => 'M' + pts(r) + 'Z').join('');
  for (let i = 0; i < 16; i++) d += 'M' + pts(rings.map(r => r[i]));
  return d;
}

const uv = document.getElementById('uv');
add(uv, 'rect', { x: 1054.500, y: 110.500, width: 322, height: 323, fill: '#575757', stroke: '#7c7c7c' });
for (let i = 1; i < 32; i++) {
  const s = i % 4 ? '#525252' : '#484848';
  add(uv, 'path', { d: `M${1054.500 + Math.round(i * 10.080)} 111V433M1055 ${433.500 - Math.round(i * 10.080)}H1376`, stroke: s });
}
const rings = net(1214.500, 272, 1);
add(uv, 'path', { d: 'M' + pts(rings[0]) + 'ZM' + pts(rings[8]) + 'Z', fill: '#fff', 'fill-opacity': .1, 'fill-rule': 'evenodd' });
add(uv, 'path', { d: 'M' + pts([rings[2][15], rings[2][0], rings[3][0], rings[3][15]]) + 'Z', fill: '#9a9a9a' });
add(uv, 'path', { d: netPath(rings), fill: 'none', stroke: '#0a0a0a', 'stroke-width': 3 });
add(uv, 'path', { d: netPath(rings), fill: 'none', stroke: '#b4b4b4', 'stroke-width': 1 });
rings.flat().forEach(p => add(uv, 'circle', { cx: p[0], cy: p[1], r: 2, fill: '#000' }));
add(uv, 'path', { d: 'M1029 433.500H1080M1054.500 407V459', stroke: '#ddd', 'stroke-dasharray': '1 1' });
add(uv, 'path', { d: 'M1054.500 421l12 12.500-12 12.500-12-12.500z', fill: 'none', stroke: '#fff' });
add(uv, 'path', { d: 'M1054.500 421l12 12.500-12 12.500-12-12.500z', fill: 'none', stroke: '#f00', 'stroke-dasharray': '4 4' });

const painted = document.getElementById('painted');
add(painted, 'rect', { x: 1028, y: 534, width: 406, height: 406, fill: '#000' });
add(painted, 'path', { d: netPath(net(1229.500, 736, 1.259)), fill: 'none', stroke: '#8c8c8c', 'stroke-width': 1 });

// ---- 3D viewport: floor grid through two vanishing points
const view = document.getElementById('scene3d');
const O = [413.500, 512], VX = [-175, 97], VY = [1320, 90];
function project(X, Y) {
  const a = -0.132 * X, b = 0.1067 * Y, w = 1 + a + b;
  return [(O[0] + a * VX[0] + b * VY[0]) / w, (O[1] + a * VX[1] + b * VY[1]) / w];
}
const gfx = add(view, 'g', { stroke: '#4b4b4b', 'stroke-width': 1.200 });
for (let k = -60; k <= 40; k++) {
  if (k === 0) continue;
  const y0 = (-0.900 + 0.132 * k) / 0.1067, x0 = (0.900 + 0.1067 * k) / 0.132;
  let p = project(k, y0), q = project(k, 400);
  add(gfx, 'line', { x1: p[0], y1: p[1], x2: q[0], y2: q[1] });
  p = project(x0, k); q = project(-400, k);
  add(gfx, 'line', { x1: p[0], y1: p[1], x2: q[0], y2: q[1] });
}
const defs = add(view, 'defs', {});
const grad = add(defs, 'linearGradient', { id: 'haze', x1: 0, y1: 0, x2: 0, y2: 1 });
add(grad, 'stop', { offset: .25, 'stop-color': '#3b3b3b', 'stop-opacity': .95 });
add(grad, 'stop', { offset: .5, 'stop-color': '#3b3b3b', 'stop-opacity': .65 });
add(grad, 'stop', { offset: 1, 'stop-color': '#3b3b3b', 'stop-opacity': 0 });
add(view, 'rect', { x: 0, y: 50, width: 820, height: 320, fill: 'url(#haze)' });
add(view, 'path', { d: 'M0 220.500L820 798.500', stroke: '#a03d4c', 'stroke-width': 1.600 });
add(view, 'path', { d: 'M0 706.500L820 322.500', stroke: '#6b952c', 'stroke-width': 1.600 });

// Torus columns; each lists cross-section vertices a..g from inner bottom to outer bottom
const cols = [
  { c: [541,482], d: [530,510], e: [520,593], f: [518,678], g: [525,712] },
  { c: [684,473], d: [711,498], e: [739,579], f: [747,662], g: [733,697] },
  { c: [804,431], d: [861,444], e: [918,510], f: [935,588], g: [905,628] },
  { b: [856,388], c: [879,368], d: [951,364], e: [1020,411], f: [1042,479], g: [1004,526] },
  { b: [862,352], c: [899,297], d: [972,277], e: [1041,305], f: [1061,364] },
  { a: [859,342], b: [841,291], c: [872,233], d: [935,200], e: [991,212] },
  { a: [797,286], b: [784,243], c: [808,180], d: [852,138], e: [893,140] },
  { a: [710,250], b: [702,210], c: [714,146], d: [742,98], e: [764,94] },
  { a: [610,233], b: [608,195], c: [610,132], d: [615,81], e: [621,76] },
  { a: [507,239], b: [510,200], c: [502,136], d: [487,88], e: [476,82] },
  { a: [413,265], b: [421,225], c: [402,161], d: [367,116], e: [336,116] },
  { a: [334,313], b: [349,267], c: [322,206], d: [267,167], e: [222,175] },
  { a: [305,345], b: [308,322], c: [273,266], d: [203,238], e: [142,259], f: [124,313] },
  { b: [304,385], c: [267,334], d: [191,323], e: [122,358], f: [103,421] },
  { c: [311,402], d: [242,407], e: [179,463], f: [161,535], g: [197,580] },
  { c: [408,456], d: [363,477], e: [318,550], f: [306,630], g: [332,667] }
];
const shade = {
  ab: Array(16).fill('#6b564b'),
  bc: ['', '', '', '#94877f', '#978a83', '#a0958f', '#a39994', '#a39994', '#988d88', '#8c7f7a', '#80726c', '#6b564c', '#6f5c52', '#75655d', '', ''],
  fg: Array(16).fill('#705d53'),
  ef: ['#9b908c', '#8d827e', '#81776f', '#6d5a4e', '', '', '', '', '', '', '', '', '#85766d', '#a0968f', '#a59b96', '#a0968f'],
  de: ['#ada49f', '#aaa19c', '#9f9691', '#a39a95', '#a39a95', '#94857f', '#8e817b', '#8e817b', '#8e817b', '#8e817b', '#8e817b', '#a0958f', '#a79e99', '#aaa19c', '#b1a8a4', '#b3aaa6'],
  cd: ['#8f8480', '#90857f', '#9a8f89', '#a79e98', '#a89f9a', '#b0a7a3', '#aea5a1', '#aea5a1', '#aba29e', '#a79e9a', '#a0958f', '#93887f', '#8f8581', '#93887f', '#90857f', '#8f8480']
};
const at = p => [220 + p[0] / 3, 400 + p[1] / 3];
['ab', 'bc', 'fg', 'ef', 'de', 'cd'].forEach(strip => {
  for (let i = 0; i < 16; i++) {
    const m = cols[i], n = cols[(i + 1) % 16], [u, v] = strip;
    if (!m[u] || !m[v] || !n[u] || !n[v]) continue;
    add(view, 'path', { d: 'M' + pts([m[u], n[u], n[v], m[v]].map(at)) + 'Z', fill: shade[strip][i], stroke: '#bf7a27' });
  }
});
cols.forEach(c => Object.values(c).forEach(p => {
  const q = at(p);
  add(view, 'circle', { cx: q[0], cy: q[1], r: 1.900, fill: '#f5800f' });
}));
add(view, 'path', { d: 'M413.500 496v11M413.500 518v11M398 512.500h10M419 512.500h10', stroke: '#111' });
add(view, 'circle', { cx: 413.500, cy: 512.500, r: 10, fill: 'none', stroke: '#fff', 'stroke-width': 1.500 });
add(view, 'circle', { cx: 413.500, cy: 512.500, r: 10, fill: 'none', stroke: '#e02020', 'stroke-width': 1.500, 'stroke-dasharray': '4 4' });
add(view, 'circle', { cx: 413.500, cy: 512.500, r: 2, fill: '#ff9a2a' });

// Orientation gizmo
[['M769 151V124', '#2e8cff'], ['M769 151L794 139', '#628b1f'], ['M769 151L790 165', '#ff3653']].forEach(a =>
  add(view, 'path', { d: a[0], stroke: a[1], 'stroke-width': 2 }));
[[749, 137, 6, '#973748'], [744, 163, 6, '#8adb0e'], [769, 177, 6, '#375f97'], [769, 124, 8, '#2e8cff', 'Z'], [794, 139, 8, '#628b1f', 'Y'], [790, 165, 8, '#ff3653', 'X']].forEach(b => {
  add(view, 'circle', { cx: b[0], cy: b[1], r: b[2], fill: b[3] });
  if (b[4]) add(view, 'text', { x: b[0], y: b[1] + 4, 'text-anchor': 'middle', 'font-size': 11, fill: '#222' }, b[4]);
});

// ---- Timeline ruler
const ruler = document.getElementById('ruler');
const fx = f => 58.700 + (f - 1) * 5.895;
add(ruler, 'rect', { x: 0, y: 995, width: 1586, height: 23, fill: '#323232' });
add(ruler, 'rect', { x: fx(1), y: 995, width: fx(250) - fx(1), height: 23, fill: '#434343' });
for (let f = 5; f <= 250; f += 5) {
  const x = Math.round(fx(f)) + .5;
  add(ruler, 'path', { d: `M${x} 995V1018`, stroke: f % 10 ? '#3a3a3a' : '#2a2a2a' });
  if (f % 10 === 0) add(ruler, 'text', { x: fx(f) - 1, y: 988, 'text-anchor': 'middle', 'font-size': 11, fill: '#a0a0a0' }, f);
}
add(ruler, 'path', { d: 'M58.500 985V1018', stroke: '#5680c2', 'stroke-width': 2 });
add(ruler, 'rect', { x: 47, y: 975, width: 23, height: 17, rx: 3, fill: '#5680c2' });
add(ruler, 'text', { x: 58, y: 988, 'text-anchor': 'middle', 'font-size': 11, fill: '#fff' }, '1');
add(ruler, 'rect', { x: 9, y: 1008, width: 1569, height: 9, rx: 4.500, fill: '#666' });
[[13], [1573]].forEach(c => add(ruler, 'circle', { cx: c[0], cy: 1012.500, r: 3, fill: '#666', stroke: '#2c2c2c', 'stroke-width': 1.500 }));
add(ruler, 'path', { d: 'M2 990l3 4-3 4M1583 990l-3 4 3 4', fill: 'none', stroke: '#aaa' });
```
